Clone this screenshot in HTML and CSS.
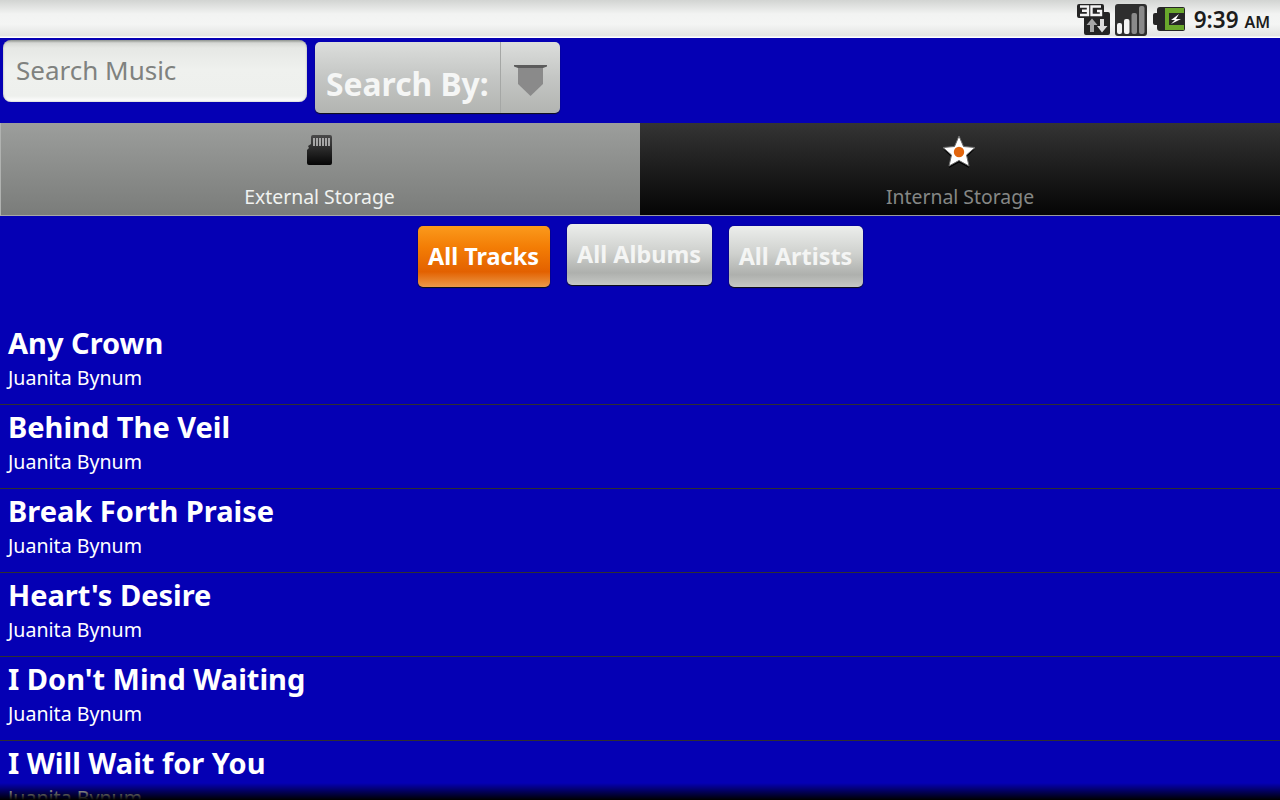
FILE: index.html
```html
<!DOCTYPE html>
<html lang="en">
<head>
  <meta charset="UTF-8" />
  <title>Music</title>
  <link rel="stylesheet" href="styles.css">
</head>
<body>
  <div class="screen">
    <!-- Status bar -->
    <header class="status-bar">
      <svg class="icon-3g" width="33" height="32" viewBox="0 0 33 32">
        <path d="M2 1h23a2 2 0 0 1 2 2v6h4a2 2 0 0 1 2 2v19a2 2 0 0 1-2 2H9a2 2 0 0 1-2-2V15H2a2 2 0 0 1-2-2V3a2 2 0 0 1 2-2z" fill="#242424"/>
        <path d="M3 3.500h8v8.500H3M5 7.700h6" fill="none" stroke="#f4f4f4" stroke-width="2.400"/>
        <path d="M24 3.500H14.500v8.500H24V8h-4" fill="none" stroke="#f4f4f4" stroke-width="2.400"/>
        <path d="M13 29v-7H9.500L15 15.500l5.500 6.500H17v7z" fill="#a8a8a8"/>
        <path d="M23 16v7h-3l5 6.500 5.500-6.500H27v-7z" fill="#dcdcdc"/>
      </svg>
      <svg class="icon-signal" width="32" height="32" viewBox="0 0 32 32">
        <rect width="32" height="32" rx="3" fill="#2e2e2e"/>
        <rect x="2" y="19" width="5" height="11" rx="2" fill="#f4f4f4"/>
        <rect x="9" y="15" width="5.500" height="15" rx="2" fill="#f4f4f4"/>
        <rect x="16.500" y="9" width="5.500" height="21" rx="2" fill="#8a8a8a"/>
        <rect x="24" y="2" width="5.500" height="28" rx="2" fill="#8a8a8a"/>
      </svg>
      <svg class="icon-battery" width="32" height="24" viewBox="0 0 32 24">
        <path d="M7 0h23a2 2 0 0 1 2 2v20a2 2 0 0 1-2 2H7a3 3 0 0 1-3-3v-3H2a2 2 0 0 1-2-2V8a2 2 0 0 1 2-2h2V3a3 3 0 0 1 3-3z" fill="#262626"/>
        <path d="M12 1h19v5H16v12h15v5H12z" fill="#6aa82c"/>
        <path d="M26 7l-8 6h4l-4 4 10-5h-5z" fill="#fff"/>
      </svg>
      <span class="clock">9:39 <small>AM</small></span>
    </header>

    <!-- Search controls -->
    <div class="search-row">
      <div class="search-box">Search Music</div>
      <div class="spinner">
        <span class="spinner-label">Search By:</span>
        <span class="spinner-arrow">
          <svg width="33" height="31" viewBox="0 0 33 31">
            <path d="M4 2h25v17L16.500 31 4 19z" fill="#8a8a8a"/>
            <path d="M0 0h33v1.500l-4 1.500H4L0 1.500z" fill="#5c5c5c"/>
          </svg>
        </span>
      </div>
    </div>

    <!-- Storage tabs -->
    <nav class="tabs">
      <div class="tab tab-active">
        <svg class="tab-icon" width="26" height="30" viewBox="0 0 26 30">
          <defs>
            <linearGradient id="sd-fill" x1="0" y1="0" x2="0" y2="1">
              <stop offset="0" stop-color="#4a4a4a"/>
              <stop offset="1" stop-color="#050505"/>
            </linearGradient>
          </defs>
          <path d="M7 0h17a2 2 0 0 1 2 2v26a2 2 0 0 1-2 2H3a2 2 0 0 1-2-2V15l2-2-1-2 3-2V2a2 2 0 0 1 2-2z" fill="url(#sd-fill)"/>
          <path d="M8 3v8M11 3v8M14 3v8M17 3v8M20 3v8M23 3v8" stroke="#c9c9c9" stroke-width="1.500"/>
        </svg>
        <span class="tab-label">External Storage</span>
      </div>
      <div class="tab tab-idle">
        <svg class="tab-icon" width="34" height="34" viewBox="0 0 34 34">
          <path d="M17 2l4.500 10 11 1-8 7.500 2.500 11L17 26 7 31.500l2.500-11-8-7.500 11-1z" fill="#000" transform="translate(0 1.500)"/>
          <path d="M17 1l4.500 10.500 11.500 1-8.500 7.500 2.500 11L17 25.500 7 31l2.500-11L1 12.500l11.500-1z" fill="#fff" stroke="#6a6a6a" stroke-width="1"/>
          <circle cx="17" cy="17" r="5.200" fill="#e2650d"/>
        </svg>
        <span class="tab-label">Internal Storage</span>
      </div>
    </nav>

    <!-- Filter buttons -->
    <div class="filters">
      <div class="filter filter-on filter-tracks">All Tracks</div>
      <div class="filter filter-albums">All Albums</div>
      <div class="filter filter-artists">All Artists</div>
    </div>

    <!-- Track list -->
    <ul class="tracks">
      <li class="track"><div class="track-title">Any Crown</div><div class="track-artist">Juanita Bynum</div></li>
      <li class="track"><div class="track-title">Behind The Veil</div><div class="track-artist">Juanita Bynum</div></li>
      <li class="track"><div class="track-title">Break Forth Praise</div><div class="track-artist">Juanita Bynum</div></li>
      <li class="track"><div class="track-title">Heart's Desire</div><div class="track-artist">Juanita Bynum</div></li>
      <li class="track"><div class="track-title">I Don't Mind Waiting</div><div class="track-artist">Juanita Bynum</div></li>
      <li class="track"><div class="track-title">I Will Wait for You</div><div class="track-artist">Juanita Bynum</div></li>
    </ul>

    <div class="list-fade"></div>
  </div>
</body>
</html>
```

FILE: styles.css
```css
/* Base styles */
html, body {
  margin: 0;
  height: 100%;
}
body {
  font-family: "Noto Sans", "Open Sans", sans-serif;
  background: #0500b4;
  overflow: hidden;
}
.screen {
  position: relative;
  display: flex;
  flex-direction: column;
  height: 800px;
  overflow: hidden;
  background: #0500b4;
}

/* Status bar */
.status-bar {
  flex: none;
  display: flex;
  justify-content: flex-end;
  align-items: center;
  height: 38px;
  box-sizing: border-box;
  padding-right: 10px;
  background: linear-gradient(#d2d4d2 0, #f2f3f2 14px, #f4f5f4 24px, #e2e3e2 36px, #fff 37px);
}
.icon-3g {
  margin-right: 5px;
}
.icon-signal {
  margin-right: 6px;
  margin-top: 1px;
}
.icon-battery {
  margin-right: 9px;
  margin-top: -1px;
}
.clock {
  font-size: 22.500px;
  font-weight: 600;
  color: #1c1c1c;
  white-space: nowrap;
}
.clock small {
  font-size: 16px;
}

/* Search row */
.search-row {
  flex: none;
  display: flex;
  align-items: flex-start;
  height: 85px;
  padding: 2px 0 0 3px;
  box-sizing: border-box;
}
.search-box {
  width: 304px;
  height: 62px;
  box-sizing: border-box;
  padding: 13px 13px;
  border-radius: 8px;
  background: linear-gradient(#8f948f 0, #d6d8d5 3px, #e6e8e5 8px, #eff1ee 30px, #eef0ed 56px, #fdfdfd 61px);
  box-shadow: inset 0 0 2px #9a9e9a;
  color: #7f827f;
  font-size: 26px;
  line-height: 35px;
}
.spinner {
  display: flex;
  width: 245px;
  height: 71px;
  margin: 2px 0 0 8px;
  border-radius: 5px;
  background: linear-gradient(#dcdedc, #c4c6c4 50%, #b2b4b1);
  box-shadow: 0 1px 1px #111;
}
.spinner-label {
  width: 186px;
  box-sizing: border-box;
  padding: 22px 0 0 11px;
  border-right: 1px solid #a5a7a5;
  color: #f5f6f5;
  font-size: 31.800px;
  line-height: 40px;
  font-weight: 700;
  white-space: nowrap;
}
.spinner-arrow {
  flex: 1;
  display: flex;
  justify-content: center;
  padding-top: 23px;
  box-sizing: border-box;
}

/* Tabs */
.tabs {
  flex: none;
  display: flex;
  height: 93px;
}
.tab {
  flex: 0 0 50%;
  display: flex;
  flex-direction: column;
  align-items: center;
  box-sizing: border-box;
}
.tab-active {
  background: linear-gradient(#9c9e9c, #7a7c7a);
  border-left: 1px solid #b0b2b0;
  border-bottom: 1px solid #a8a8a8;
  padding-top: 12px;
}
.tab-active .tab-icon {
  margin-right: 4px;
}
.tab-idle {
  background: linear-gradient(#343434, #050505);
  border-bottom: 1px solid #9a9a9a;
  padding-top: 12px;
}
.tab-idle .tab-icon {
  margin-right: 2px;
}
.tab-label {
  font-size: 19.400px;
  line-height: 28px;
  color: #f0f2f0;
}
.tab-active .tab-label {
  margin-top: 18px;
  margin-right: 2px;
}
.tab-idle .tab-label {
  margin-top: 14px;
  color: #858785;
}

/* Filter buttons */
.filters {
  flex: none;
  display: flex;
  justify-content: center;
  align-items: flex-start;
  gap: 17px;
  height: 105px;
  padding-top: 8px;
  box-sizing: border-box;
}
.filter {
  height: 61px;
  box-sizing: border-box;
  border-radius: 5px;
  background: linear-gradient(#eceeec, #cfd1ce 45%, #aeb0ad 80%, #c6c8c5);
  box-shadow: 0 0 1px #111, 0 1px 1px #111;
  color: #f4f5f4;
  font-size: 23.400px;
  font-weight: 700;
  line-height: 60px;
  text-align: center;
  white-space: nowrap;
}
.filter-on {
  background: linear-gradient(#fb9a1c, #f37d05 35%, #e36100 75%, #eb9a4a);
  color: #fff;
}
.filter-tracks {
  width: 132px;
  margin-top: 2px;
}
.filter-albums {
  width: 145px;
}
.filter-artists {
  width: 134px;
  margin-top: 2px;
}

/* Track list */
.tracks {
  flex: 1;
  list-style: none;
  margin: 0;
  padding: 0;
  overflow: hidden;
}
.track {
  height: 84px;
  box-sizing: border-box;
  padding: 2px 8px 0;
  border-bottom: 1px solid #303030;
  color: #fff;
}
.track-title {
  font-size: 29px;
  line-height: 40px;
  font-weight: 700;
  white-space: nowrap;
}
.track-artist {
  font-size: 19.600px;
  line-height: 30px;
}
.list-fade {
  position: absolute;
  left: 0;
  right: 0;
  bottom: 0;
  height: 17px;
  background: linear-gradient(rgba(0, 0, 0, 0), #000);
}
```
